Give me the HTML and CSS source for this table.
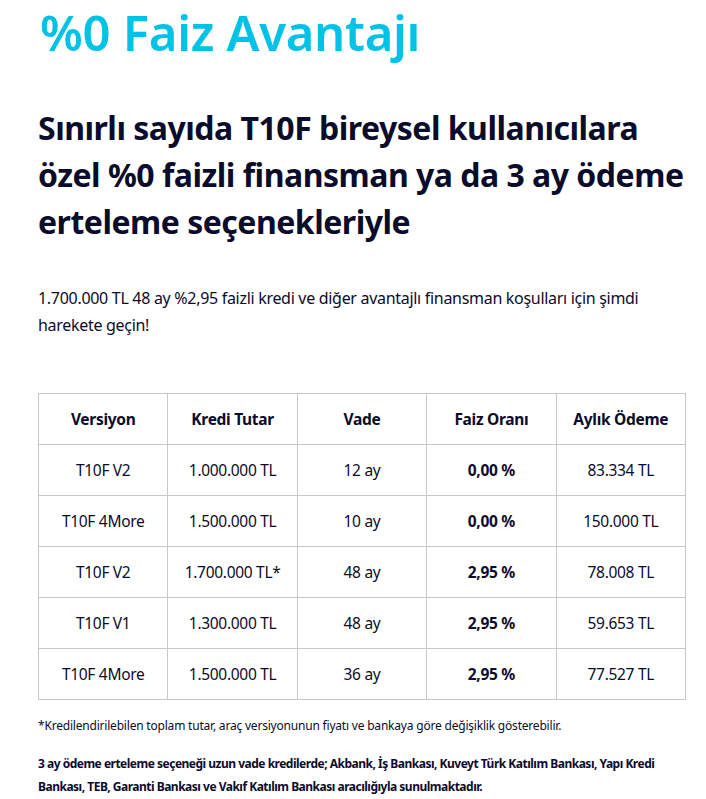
FILE: index.html
```html
<!DOCTYPE html>
<html lang="tr">
<head>
<meta charset="utf-8">
<link rel="stylesheet" href="styles.css">
</head>
<body>
<main class="page">
  <h1 class="title">%0 Faiz Avantajı</h1>
  <h2 class="headline">Sınırlı sayıda T10F bireysel kullanıcılara özel %0 faizli finansman ya da 3 ay ödeme erteleme seçenekleriyle</h2>
  <p class="lead">1.700.000 TL 48 ay %2,95 faizli kredi ve diğer avantajlı finansman koşulları için şimdi harekete geçin!</p>
  <table class="rates">
    <thead>
      <tr><th>Versiyon</th><th>Kredi Tutar</th><th>Vade</th><th>Faiz Oranı</th><th>Aylık Ödeme</th></tr>
    </thead>
    <tbody>
      <tr><td>T10F V2</td><td>1.000.000 TL</td><td>12 ay</td><td class="b">0,00 %</td><td>83.334 TL</td></tr>
      <tr><td>T10F 4More</td><td>1.500.000 TL</td><td>10 ay</td><td class="b">0,00 %</td><td>150.000 TL</td></tr>
      <tr><td>T10F V2</td><td>1.700.000 TL*</td><td>48 ay</td><td class="b">2,95 %</td><td>78.008 TL</td></tr>
      <tr><td>T10F V1</td><td>1.300.000 TL</td><td>48 ay</td><td class="b">2,95 %</td><td>59.653 TL</td></tr>
      <tr><td>T10F 4More</td><td>1.500.000 TL</td><td>36 ay</td><td class="b">2,95 %</td><td>77.527 TL</td></tr>
    </tbody>
  </table>
  <p class="note">*Kredilendirilebilen toplam tutar, araç versiyonunun fiyatı ve bankaya göre değişiklik gösterebilir.</p>
  <p class="banks">3 ay ödeme erteleme seçeneği uzun vade kredilerde; Akbank, İş Bankası, Kuveyt Türk Katılım Bankası, Yapı Kredi Bankası, TEB, Garanti Bankası ve Vakıf Katılım Bankası aracılığıyla sunulmaktadır.</p>
</main>
</body>
</html>
```
FILE: styles.css
```css
html, body {
  margin: 0;
  padding: 0;
  background: #ffffff;
}
body {
  font-family: "Noto Sans", "Open Sans", sans-serif;
  color: #0b0b2b;
}
.page {
  padding: 0 20px 0 38px;
  width: 648px;
}
.title {
  margin: 0;
  padding: 2px 0 0 2px;
  font-family: "Noto Sans", sans-serif;
  font-weight: 600;
  font-size: 49px;
  line-height: 60px;
  letter-spacing: -0.3px;
  color: #00c2e6;
}
.headline {
  margin: 42px 0 0;
  font-size: 32px;
  line-height: 47px;
  font-weight: 700;
  letter-spacing: -0.5px;
  color: #0b0b2b;
}
.lead {
  margin: 40px 0 0;
  font-size: 16px;
  line-height: 27px;
  letter-spacing: -0.3px;
}
.rates {
  margin-top: 54px;
  width: 648px;
  border-collapse: collapse;
  table-layout: fixed;
  font-size: 15.5px;
  letter-spacing: -0.3px;
}
.rates th, .rates td {
  border: 1px solid #c8c8c8;
  height: 50px;
  padding: 0;
  text-align: center;
  vertical-align: middle;
}
.rates th {
  font-weight: 700;
}
.rates td.b {
  font-weight: 700;
}
.note {
  margin: 16px 0 0;
  font-size: 12px;
  line-height: 20px;
  letter-spacing: -0.2px;
}
.banks {
  margin: 16px 0 0;
  font-size: 12px;
  line-height: 23px;
  font-weight: 700;
  letter-spacing: -0.5px;
}
```
